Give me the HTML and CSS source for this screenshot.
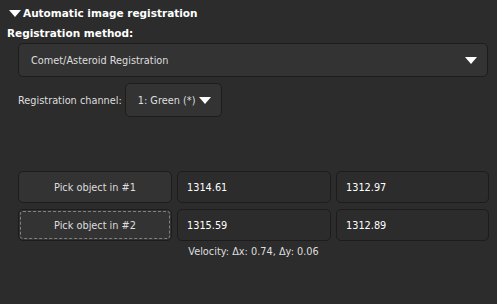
FILE: index.html
```html
<!DOCTYPE html>
<html lang="en">
<head>
  <meta charset="UTF-8" />
  <title>Registration</title>
  <link rel="stylesheet" href="styles.css">
</head>
<body>

  <div class="panel">
    <div class="section-title">
      <svg class="expander" width="12" height="7" viewBox="0 0 12 7"><polygon points="0,0 12,0 6,7" fill="#fff"/></svg>
      <span>Automatic image registration</span>
    </div>

    <div class="label-bold">Registration method:</div>

    <div class="combo combo-wide">
      <span>Comet/Asteroid Registration</span>
      <svg class="arrow" width="12" height="7" viewBox="0 0 12 7"><polygon points="0,0 12,0 6,7" fill="#fff"/></svg>
    </div>

    <div class="channel-row">
      <span class="label">Registration channel:</span>
      <div class="combo combo-small">
        <span>1: Green (*)</span>
        <svg class="arrow" width="12" height="7" viewBox="0 0 12 7"><polygon points="0,0 12,0 6,7" fill="#fff"/></svg>
      </div>
    </div>

    <div class="pick-grid">
      <div class="btn">Pick object in #1</div>
      <div class="field">1314.61</div>
      <div class="field">1312.97</div>
      <div class="btn focused">Pick object in #2</div>
      <div class="field">1315.59</div>
      <div class="field">1312.89</div>
    </div>

    <div class="velocity">Velocity: &Delta;x: 0.74, &Delta;y: 0.06</div>
  </div>

</body>
</html>
```

FILE: styles.css
```css
body {
  margin: 0;
  background: #2c2c2c;
  color: #dedede;
  font-family: 'DejaVu Sans', sans-serif;
  font-size: 9.75px;
}

.panel {
  display: flex;
  flex-direction: column;
  padding: 5px 9px 0 7px;
}

.section-title {
  display: flex;
  align-items: center;
  gap: 2px;
  font-weight: bold;
  font-size: 10.5px;
  color: #fff;
  height: 16px;
  padding-left: 2px;
}

.expander {
  margin-top: 1px;
}

.label-bold {
  font-weight: bold;
  font-size: 10.5px;
  line-height: 12px;
  color: #fff;
  margin-top: 6px;
}

.combo {
  display: flex;
  align-items: center;
  justify-content: space-between;
  background: #333;
  border: 1px solid #1c1c1c;
  border-radius: 5px;
  box-sizing: border-box;
}

.combo-wide {
  margin: 4px 0 0 11px;
  height: 34px;
  padding: 0 10px 0 12px;
}

.channel-row {
  display: flex;
  align-items: center;
  gap: 3px;
  margin: 6px 0 0 11px;
}

.combo-small {
  width: 97px;
  height: 34px;
  padding: 0 10px 0 12px;
}

.pick-grid {
  display: grid;
  grid-template-columns: 154px 154px 153px;
  grid-auto-rows: 32px;
  gap: 6px 5px;
  margin: 54px 0 0 11px;
}

.btn {
  display: flex;
  align-items: center;
  justify-content: center;
  background: #333;
  border: 1px solid #1c1c1c;
  border-radius: 5px;
}

.btn.focused {
  outline: 1px dashed #808080;
  outline-offset: -3px;
}

.field {
  display: flex;
  align-items: center;
  padding-left: 9px;
  border: 1px solid #1c1c1c;
  border-radius: 5px;
  color: #fff;
}

.velocity {
  text-align: center;
  margin-top: 5px;
  padding-left: 12px;
}
```
